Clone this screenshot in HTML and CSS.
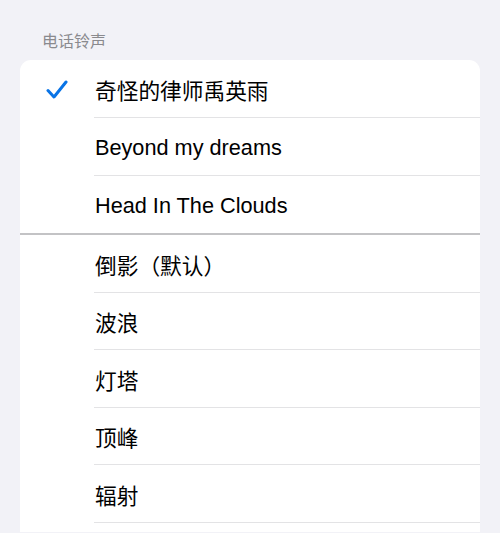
FILE: index.html
```html
<!DOCTYPE html>
<html lang="zh">
<head>
<meta charset="utf-8">
<link rel="stylesheet" href="styles.css">
</head>
<body>
<div class="page">
  <div class="section-title">电话铃声</div>
  <div class="card">
    <div class="row">
      <div class="lead">
        <svg class="check" width="22" height="20" viewBox="0 0 22 20"><path d="M2 10.5 L8 17 L20 2" fill="none" stroke="#0a74e6" stroke-width="3" stroke-linecap="round" stroke-linejoin="round"/></svg>
      </div>
      <div class="body">奇怪的律师禹英雨</div>
    </div>
    <div class="row">
      <div class="lead"></div>
      <div class="body">Beyond my dreams</div>
    </div>
    <div class="row row-group-end">
      <div class="lead"></div>
      <div class="body">Head In The Clouds</div>
    </div>
    <div class="row row-sm">
      <div class="lead"></div>
      <div class="body">倒影（默认）</div>
    </div>
    <div class="row row-sm">
      <div class="lead"></div>
      <div class="body">波浪</div>
    </div>
    <div class="row row-sm">
      <div class="lead"></div>
      <div class="body">灯塔</div>
    </div>
    <div class="row row-sm">
      <div class="lead"></div>
      <div class="body">顶峰</div>
    </div>
    <div class="row row-sm">
      <div class="lead"></div>
      <div class="body">辐射</div>
    </div>
  </div>
</div>
</body>
</html>
```
FILE: styles.css
```css
html, body {
  margin: 0;
  padding: 0;
  background: #f2f2f7;
  height: 533px;
  overflow: hidden;
}
.page {
  font-family: "Liberation Sans", "Noto Sans CJK SC", sans-serif;
  padding-top: 31px;
}
.section-title {
  padding-left: 42px;
  font-size: 16px;
  line-height: 22px;
  color: #8a8a8e;
  height: 29px;
}
.card {
  margin: 0 20px;
  background: #ffffff;
  border-radius: 11px 11px 0 0;
  overflow: hidden;
  padding-bottom: 9px;
}
.row {
  display: flex;
  height: 58px;
}
.row-sm {
  height: 57.5px;
}
.lead {
  width: 74px;
  flex: none;
  display: flex;
  align-items: center;
  justify-content: center;
  padding-top: 2px;
}
.body {
  flex: 1;
  display: flex;
  align-items: center;
  padding-left: 1px;
  padding-top: 2px;
  font-size: 21.7px;
  color: #000000;
  border-bottom: 1px solid #e3e3e5;
  box-sizing: border-box;
}
.row-group-end {
  border-bottom: 2px solid #c3c3c5;
  height: 59px;
  box-sizing: border-box;
}
.row-group-end .body {
  border-bottom: none;
}
```
